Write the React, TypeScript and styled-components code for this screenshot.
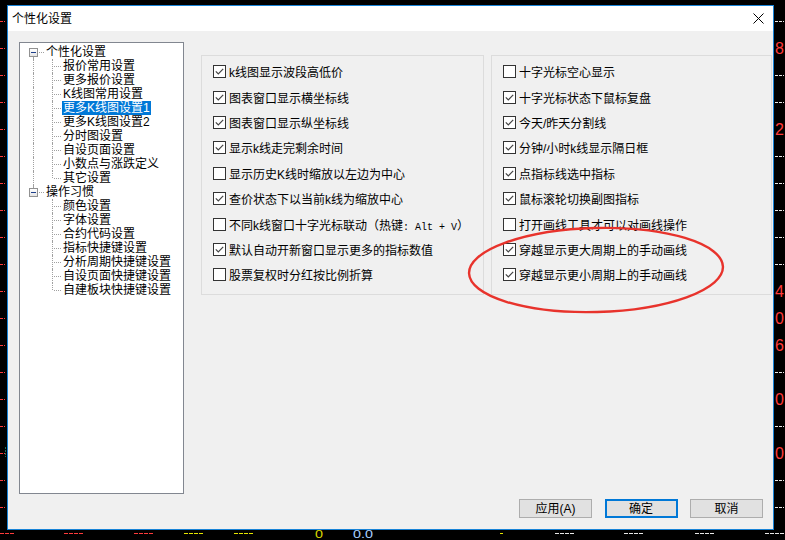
import React from "react";
import styled, { createGlobalStyle } from "styled-components";

const GlobalStyle = createGlobalStyle`
  html, body { margin: 0; padding: 0; background: #000; }
  body { font-family: "Liberation Sans", "Noto Sans CJK SC", sans-serif; }
`;

const FONT = `"Liberation Sans", "Noto Sans CJK SC", sans-serif`;

const Screen = styled.div`
  position: relative;
  width: 785px;
  height: 540px;
  overflow: hidden;
  background: #000;
  padding: 5px 0 0 7px;
  box-sizing: border-box;
`;

const Backdrop = styled.svg`
  position: absolute;
  left: 0;
  top: 0;
`;

const Dialog = styled.div`
  position: relative;
  width: 767px;
  height: 525px;
  box-sizing: border-box;
  border: 1px solid #1883d7;
  background: #f0f0f0;
  display: flex;
  flex-direction: column;
  font-family: ${FONT};
  color: #000;
`;

const TitleBar = styled.div`
  height: 25px;
  flex: none;
  background: #fff;
  display: flex;
  align-items: center;
  padding-left: 4px;
  font-size: 12px;
`;

const TitleText = styled.span`
  line-height: 14px;
`;

const CloseGlyph = styled.svg`
  margin-left: auto;
  margin-right: 9px;
`;

const Body = styled.div`
  flex: 1;
  display: flex;
  flex-direction: column;
  padding: 11px 0 11px 11px;
`;

const MainRow = styled.div`
  display: flex;
  height: 452px;
`;

const Tree = styled.div`
  width: 165px;
  height: 452px;
  box-sizing: border-box;
  border: 1px solid #828790;
  background: #fff;
  padding-top: 2px;
  flex: none;
`;

const TreeRow = styled.div`
  display: flex;
  height: 14px;
  align-items: stretch;
`;

const RootGuide = styled.div<{ $up: boolean; $down: boolean }>`
  position: relative;
  width: 25px;
  flex: none;
  display: flex;
  align-items: center;
  &::before {
    content: "";
    position: absolute;
    left: 13px;
    top: ${(p) => (p.$up ? "0" : "12px")};
    bottom: ${(p) => (p.$down ? "0" : "12px")};
    border-left: 1px dotted #a0a0a0;
    display: ${(p) => (p.$up || p.$down ? "block" : "none")};
  }
  &::after {
    content: "";
    position: absolute;
    left: 19px;
    width: 5px;
    top: 7px;
    border-top: 1px dotted #a0a0a0;
  }
`;

const Expander = styled.span`
  position: relative;
  z-index: 1;
  margin-left: 9px;
  width: 9px;
  height: 9px;
  box-sizing: border-box;
  border: 1px solid #919191;
  background: linear-gradient(#ffffff, #e4e4e4);
  display: flex;
  align-items: center;
  justify-content: center;
  &::after {
    content: "";
    width: 5px;
    height: 1px;
    background: #1e3f8a;
  }
`;

const LevelGuide = styled.div<{ $through: boolean }>`
  position: relative;
  width: 23px;
  flex: none;
  &::before {
    content: "";
    position: absolute;
    left: 13px;
    top: 0;
    bottom: 0;
    border-left: 1px dotted #a0a0a0;
    display: ${(p) => (p.$through ? "block" : "none")};
  }
`;

const BranchGuide = styled.div<{ $last: boolean }>`
  position: relative;
  width: 19px;
  flex: none;
  &::before {
    content: "";
    position: absolute;
    left: 9px;
    top: 0;
    height: ${(p) => (p.$last ? "7px" : "14px")};
    border-left: 1px dotted #a0a0a0;
  }
  &::after {
    content: "";
    position: absolute;
    left: 11px;
    width: 7px;
    top: 7px;
    border-top: 1px dotted #a0a0a0;
  }
`;

const TreeLabel = styled.span<{ $selected?: boolean }>`
  font-size: 12px;
  line-height: 14px;
  height: 14px;
  padding: 0 1px;
  white-space: nowrap;
  background: ${(p) => (p.$selected ? "#0078d7" : "transparent")};
  color: ${(p) => (p.$selected ? "#fff" : "#000")};
`;

const Panels = styled.div`
  display: flex;
  gap: 7px;
  margin-left: 17px;
  margin-top: 13px;
  align-items: flex-start;
`;

const Panel = styled.div<{ $w: number }>`
  width: ${(p) => p.$w}px;
  height: 240px;
  box-sizing: border-box;
  border: 1px solid #dcdcdc;
  padding: 3px 0 0 11px;
`;

const OptionRow = styled.div`
  height: 25.4px;
  display: flex;
  align-items: center;
  font-size: 12px;
  white-space: nowrap;
`;

const Box = styled.span`
  width: 13px;
  height: 13px;
  box-sizing: border-box;
  border: 1px solid #333;
  background: #fff;
  flex: none;
  display: flex;
  align-items: center;
  justify-content: center;
  margin-right: 3px;
`;

const Mono = styled.span`
  font-family: "Liberation Mono", monospace;
  font-size: 10px;
  white-space: pre;
`;

const ButtonRow = styled.div`
  display: flex;
  justify-content: flex-end;
  gap: 12.5px;
  margin-top: 5px;
  padding-right: 10px;
`;

const Btn = styled.button<{ $default?: boolean }>`
  width: 73px;
  height: 19px;
  box-sizing: border-box;
  border: ${(p) => (p.$default ? "2px solid #0078d7" : "1px solid #adadad")};
  background: #e1e1e1;
  font-family: ${FONT};
  font-size: 12px;
  color: #000;
  padding: 0;
  line-height: 1;
  display: flex;
  align-items: center;
  justify-content: center;
`;

const Annotation = styled.svg`
  position: absolute;
  left: 0;
  top: 0;
  pointer-events: none;
`;

const groups = [
  {
    label: "个性化设置",
    children: [
      "报价常用设置",
      "更多报价设置",
      "K线图常用设置",
      "更多K线图设置1",
      "更多K线图设置2",
      "分时图设置",
      "自设页面设置",
      "小数点与涨跌定义",
      "其它设置",
    ],
  },
  {
    label: "操作习惯",
    children: [
      "颜色设置",
      "字体设置",
      "合约代码设置",
      "指标快捷键设置",
      "分析周期快捷键设置",
      "自设页面快捷键设置",
      "自建板块快捷键设置",
    ],
  },
];

type Opt = { label: React.ReactNode; checked: boolean };

const leftOptions: Opt[] = [
  { label: "k线图显示波段高低价", checked: true },
  { label: "图表窗口显示横坐标线", checked: true },
  { label: "图表窗口显示纵坐标线", checked: true },
  { label: "显示k线走完剩余时间", checked: true },
  { label: "显示历史K线时缩放以左边为中心", checked: false },
  { label: "查价状态下以当前k线为缩放中心", checked: true },
  {
    label: (
      <>
        不同k线窗口十字光标联动（热键<Mono>: Alt + V</Mono>）
      </>
    ),
    checked: false,
  },
  { label: "默认自动开新窗口显示更多的指标数值", checked: true },
  { label: "股票复权时分红按比例折算", checked: false },
];

const rightOptions: Opt[] = [
  { label: "十字光标空心显示", checked: false },
  { label: "十字光标状态下鼠标复盘", checked: true },
  { label: "今天/昨天分割线", checked: true },
  { label: "分钟/小时k线显示隔日框", checked: true },
  { label: "点指标线选中指标", checked: true },
  { label: "鼠标滚轮切换副图指标", checked: true },
  { label: "打开画线工具才可以对画线操作", checked: false },
  { label: "穿越显示更大周期上的手动画线", checked: true },
  { label: "穿越显示更小周期上的手动画线", checked: true },
];

const Check = ({ checked }: { checked: boolean }) => (
  <Box>
    {checked && (
      <svg width="11" height="11" viewBox="0 0 11 11">
        <polyline points="1.8,5.4 4.3,7.9 9.2,2.8" fill="none" stroke="#444" strokeWidth="1.2" />
      </svg>
    )}
  </Box>
);

const OptionList = ({ options, w }: { options: Opt[]; w: number }) => (
  <Panel $w={w}>
    {options.map((o, i) => (
      <OptionRow key={i}>
        <Check checked={o.checked} />
        <span>{o.label}</span>
      </OptionRow>
    ))}
  </Panel>
);

const ChartBackdrop = () => {
  const ticks = Array.from({ length: 19 }, (_, k) => 20.7 + 27 * k);
  const rightLabels: Record<number, string> = { 1: "8", 4: "2", 10: "4", 11: "0", 12: "6", 14: "0", 16: "0" };
  const bottomDashes: [number, number, string][] = [
    [0, 14, "#ff3b3b"],
    [64, 84, "#ff3b3b"],
    [134, 154, "#ff3b3b"],
    [184, 204, "#e6e600"],
    [234, 254, "#e6e600"],
    [500, 503, "#e6e600"],
    [555, 574, "#e8e8e8"],
    [624, 644, "#e8e8e8"],
    [695, 714, "#e8e8e8"],
    [765, 785, "#e8e8e8"],
  ];
  return (
    <Backdrop width="785" height="540" viewBox="0 0 785 540">
      {ticks.map((y, k) => (
        <line key={"l" + k} x1="0" x2="5" y1={Math.round(y) + 0.5} y2={Math.round(y) + 0.5} stroke="#ff3b3b" strokeDasharray="3 1" />
      ))}
      {ticks.map((y, k) =>
        rightLabels[k] ? (
          <text key={"r" + k} x="775" y={y + 6} fill="#ff3b3b" fontSize="16" fontFamily="Liberation Sans, sans-serif">
            {rightLabels[k]}
          </text>
        ) : (
          <line key={"r" + k} x1="775" x2="784" y1={Math.round(y) + 0.5} y2={Math.round(y) + 0.5} stroke="#e8e8e8" strokeDasharray="3 1" />
        )
      )}
      {bottomDashes.map(([a, b, c], i) => (
        <line key={"b" + i} x1={a} x2={b} y1="533.5" y2="533.5" stroke={c} strokeDasharray="4 1" />
      ))}
      <line x1="5.5" x2="5.5" y1="447" y2="457" stroke="#1c6e5a" strokeDasharray="2 1" />
      <text x="315" y="537.5" fill="#d8d800" fontSize="10.5" textLength="8" lengthAdjust="spacingAndGlyphs" fontFamily="Liberation Sans, sans-serif">0</text>
      <text x="353" y="537.5" fill="#a8d0ff" fontSize="10.5" textLength="20" lengthAdjust="spacingAndGlyphs" fontFamily="Liberation Sans, sans-serif">0.0</text>
    </Backdrop>
  );
};

export default function App() {
  return (
    <>
      <GlobalStyle />
      <Screen>
        <ChartBackdrop />
        <Dialog>
          <TitleBar>
            <TitleText>个性化设置</TitleText>
            <CloseGlyph width="11" height="11" viewBox="0 0 11 11">
              <path d="M0.5 0.5 L10.5 10.5 M10.5 0.5 L0.5 10.5" stroke="#000" strokeWidth="1" />
            </CloseGlyph>
          </TitleBar>
          <Body>
            <MainRow>
              <Tree>
                {groups.map((g, gi) => {
                  const lastGroup = gi === groups.length - 1;
                  return (
                    <React.Fragment key={g.label}>
                      <TreeRow>
                        <RootGuide $up={gi > 0} $down={!lastGroup}>
                          <Expander />
                        </RootGuide>
                        <TreeLabel>{g.label}</TreeLabel>
                      </TreeRow>
                      {g.children.map((c, ci) => (
                        <TreeRow key={c}>
                          <LevelGuide $through={!lastGroup} />
                          <BranchGuide $last={ci === g.children.length - 1} />
                          <TreeLabel $selected={c === "更多K线图设置1"}>{c}</TreeLabel>
                        </TreeRow>
                      ))}
                    </React.Fragment>
                  );
                })}
              </Tree>
              <Panels>
                <OptionList options={leftOptions} w={283} />
                <OptionList options={rightOptions} w={281} />
              </Panels>
            </MainRow>
            <ButtonRow>
              <Btn>应用(A)</Btn>
              <Btn $default>确定</Btn>
              <Btn>取消</Btn>
            </ButtonRow>
          </Body>
          <Annotation width="765" height="523" viewBox="0 0 765 523">
            <ellipse cx="588" cy="264" rx="127" ry="42" fill="none" stroke="#e8332c" strokeWidth="2.4" transform="rotate(-1.5 588 264)" />
          </Annotation>
        </Dialog>
      </Screen>
    </>
  );
}
